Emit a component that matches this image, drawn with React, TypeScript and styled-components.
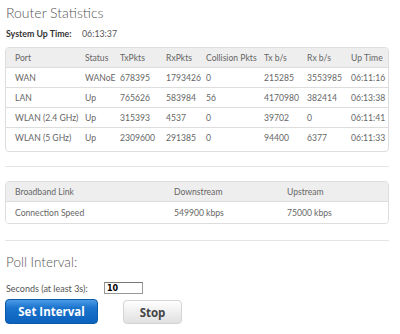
import React from "react";
import styled, { createGlobalStyle } from "styled-components";

const Global = createGlobalStyle`
  *, *::before, *::after { box-sizing: border-box; }
  html, body { margin: 0; padding: 0; background: #fff; }
  body { font-family: Lato, "Open Sans", sans-serif; color: #666; }
`;

const Page = styled.div`
  width: 400px;
  height: 334px;
  padding: 0 11px 0 5px;
  overflow: hidden;
`;

const Title = styled.h1`
  margin: 0;
  padding: 5px 0 0 1px;
  height: 21px;
  font-size: 14px;
  font-weight: 300;
  color: #555;
  line-height: 16px;
`;

const UpTime = styled.div`
  display: flex;
  padding: 6px 0 0 1px;
  height: 20px;
  font-size: 8.8px;
  line-height: 14px;
`;

const UpLabel = styled.span`
  font-weight: 700;
  color: #333;
  width: 76px;
`;

const UpValue = styled.span`
  color: #555;
`;

const Box = styled.div<{ $top: number; $pad?: number }>`
  margin-top: ${(p) => p.$top}px;
  border: 1px solid #ddd;
  border-radius: 4px;
  overflow: hidden;
  padding-bottom: ${(p) => p.$pad ?? 0}px;
`;

const Row = styled.div<{ $cols: string; $head?: boolean; $last?: boolean; $h?: number }>`
  display: grid;
  grid-template-columns: ${(p) => p.$cols};
  align-items: center;
  height: ${(p) => p.$h ?? 20}px;
  padding-left: 9px;
  font-size: 8.6px;
  color: #666;
  background: ${(p) => (p.$head ? "#eeeeee" : "#fff")};
  border-bottom: ${(p) => (p.$last ? "none" : "1px solid #ddd")};
  white-space: nowrap;
`;

const Cell = styled.span``;

const Sep = styled.div<{ $top: number }>`
  margin-top: ${(p) => p.$top}px;
  height: 1px;
  background: #e4e4e4;
`;

const PollTitle = styled.h2`
  margin: 0;
  padding: 12px 0 0 1px;
  height: 30px;
  font-size: 13.5px;
  font-weight: 300;
  color: #555;
  line-height: 18px;
`;

const Form = styled.div`
  display: flex;
  align-items: flex-end;
  padding: 11px 0 0 1px;
  height: 23px;
  font-size: 9px;
  color: #555;
`;

const FormLabel = styled.span`
  width: 98px;
  line-height: 11px;
`;

const Input = styled.input`
  width: 39px;
  height: 12px;
  border: 1px solid #999;
  border-top-color: #777;
  padding: 0 2px;
  font-size: 8px;
  font-weight: 700;
  font-family: "DejaVu Sans", sans-serif;
  color: #000;
`;

const Buttons = styled.div`
  display: flex;
  align-items: flex-start;
  gap: 25px;
  padding-top: 5px;
`;

const Button = styled.button<{ $primary?: boolean }>`
  height: ${(p) => (p.$primary ? 25 : 24)}px;
  width: ${(p) => (p.$primary ? 93 : 59)}px;
  margin-top: ${(p) => (p.$primary ? 0 : 1)}px;
  border-radius: 4px;
  font-family: "Open Sans", Lato, sans-serif;
  font-weight: 700;
  font-size: 11.5px;
  cursor: pointer;
  padding: 0;
  ${(p) =>
    p.$primary
      ? `
    color: #fff;
    border: 1px solid #0b5aa8;
    background: linear-gradient(#4c9be6 0%, #1a73cc 35%, #0c62bd 100%);
  `
      : `
    color: #444;
    border: 1px solid #d4d4d4;
    background: linear-gradient(#ffffff 0%, #f2f2f2 40%, #e0e0e0 100%);
  `}
`;

const statCols = "70px 35px 46px 40px 58px 43px 44px 1fr";
const bbCols = "159px 113px 1fr";

const stats = [
  ["WAN", "WANoE", "678395", "1793426", "0", "215285", "3553985", "06:11:16"],
  ["LAN", "Up", "765626", "583984", "56", "4170980", "382414", "06:13:38"],
  ["WLAN (2.4 GHz)", "Up", "315393", "4537", "0", "39702", "0", "06:11:41"],
  ["WLAN (5 GHz)", "Up", "2309600", "291385", "0", "94400", "6377", "06:11:33"],
];

const heads = ["Port", "Status", "TxPkts", "RxPkts", "Collision Pkts", "Tx b/s", "Rx b/s", "Up Time"];

export default function App() {
  return (
    <>
      <Global />
      <Page>
        <Title>Router Statistics</Title>
        <UpTime>
          <UpLabel>System Up Time:</UpLabel>
          <UpValue>06:13:37</UpValue>
        </UpTime>
        <Box $top={6} $pad={3}>
          <Row $cols={statCols} $head>
            {heads.map((h) => (
              <Cell key={h}>{h}</Cell>
            ))}
          </Row>
          {stats.map((r, i) => (
            <Row key={r[0]} $cols={statCols} $last={i === stats.length - 1}>
              {r.map((c, j) => (
                <Cell key={j}>{c}</Cell>
              ))}
            </Row>
          ))}
        </Box>
        <Sep $top={14} />
        <Box $top={14}>
          <Row $cols={bbCols} $head>
            <Cell>Broadband Link</Cell>
            <Cell>Downstream</Cell>
            <Cell>Upstream</Cell>
          </Row>
          <Row $cols={bbCols} $last $h={21}>
            <Cell>Connection Speed</Cell>
            <Cell>549900 kbps</Cell>
            <Cell>75000 kbps</Cell>
          </Row>
        </Box>
        <Sep $top={16} />
        <PollTitle>Poll Interval:</PollTitle>
        <Form>
          <FormLabel>Seconds (at least 3s):</FormLabel>
          <Input defaultValue="10" />
        </Form>
        <Buttons>
          <Button $primary>Set Interval</Button>
          <Button>Stop</Button>
        </Buttons>
      </Page>
    </>
  );
}
